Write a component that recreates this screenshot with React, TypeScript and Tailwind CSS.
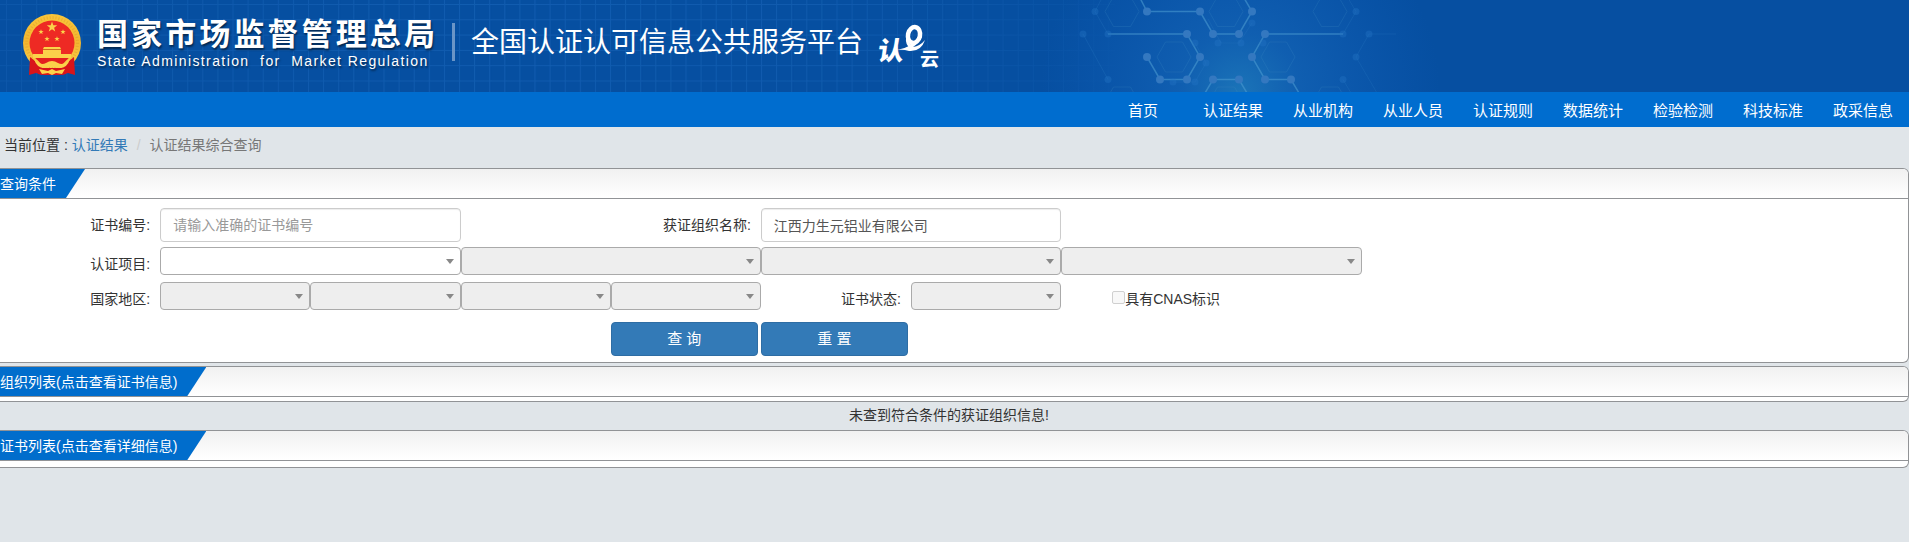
import type { ReactNode } from 'react';
import clsx from 'clsx';

const navItems = ['首页', '认证结果', '从业机构', '从业人员', '认证规则', '数据统计', '检验检测', '科技标准', '政采信息'];

const chains = [
  '1140,-2 1147,11.5 1200,11.5 1213,34 1239,34 1252,11.5 1244,-2',
  '1108,34 1187,34 1200,57 1187,79.5 1160,79.5 1147,57',
  '1343,34 1265,34 1252,57 1265,79.5 1291,79.5 1299,93',
  '1205,93 1213,79.5 1239,79.5 1247,93',
];

const faintChains = [
  '1102,-2 1095,11.5 1108,34',
  '1083,34 1108,79.5',
  '1348,-2 1356,11.5 1343,34',
  '1396,34 1369,34 1356,57 1377,93',
  '1343,79.5 1351,93',
  '1208,19 1221,43 1239,43 1252,23',
  '1195,43 1206,63 1195,82 1173,82',
];

const dots = [
  [1147, 11.5], [1200, 11.5], [1213, 34], [1239, 34], [1252, 11.5],
  [1187, 34], [1200, 57], [1187, 79.5], [1160, 79.5], [1147, 57],
  [1265, 34], [1252, 57], [1265, 79.5], [1291, 79.5], [1213, 79.5], [1239, 79.5],
];

const faintDots = [
  [1108, 34], [1343, 34], [1356, 11.5], [1369, 34], [1356, 57], [1343, 79.5],
  [1108, 79.5], [1095, 11.5], [1083, 34], [1218, 43], [1241, 43], [1252, 23],
  [1195, 43], [1206, 63], [1195, 82], [1173, 82], [1263, 43],
];

const hexes = [
  [1226, 11.5], [1174, 57], [1278, 57], [1226, 102], [1330, 11.5], [1122, 11.5], [1330, 102], [1122, 102],
];

const HeaderBackdrop = () => (
  <svg className="absolute left-0 top-0" width="1500" height="92" aria-hidden="true">
    <defs>
      <pattern id="grid" width="15.1" height="15.3" patternUnits="userSpaceOnUse" x="6" y="4">
        <path d="M.5 0V15.3M0 .5H15.1" stroke="#1c68bb" strokeOpacity=".55" />
      </pattern>
      <linearGradient id="gridFade">
        <stop offset="0" stopColor="#fff" stopOpacity=".6" />
        <stop offset=".4" stopColor="#fff" />
        <stop offset=".75" stopColor="#fff" stopOpacity=".9" />
        <stop offset="1" stopColor="#fff" stopOpacity=".2" />
      </linearGradient>
      <mask id="gridMask">
        <rect width="1115" height="92" fill="url(#gridFade)" />
      </mask>
      <radialGradient id="glow" cx="1240" cy="92" r="200" gradientUnits="userSpaceOnUse">
        <stop offset="0" stopColor="#1b74b8" />
        <stop offset=".3" stopColor="#1160b2" stopOpacity=".9" />
        <stop offset="1" stopColor="#0d5ab4" stopOpacity="0" />
      </radialGradient>
    </defs>
    <rect width="1115" height="92" fill="url(#grid)" mask="url(#gridMask)" />
    <rect x="1040" width="400" height="92" fill="url(#glow)" />
    <g fill="none" stroke="#3f8cc4" strokeOpacity=".22">
      {hexes.map(([x, y]) => (
        <path key={`${x}-${y}`} d={`M${x - 17} ${y}l8.5 -15h17l8.5 15l-8.5 15h-17z`} />
      ))}
    </g>
    <g fill="none" stroke="#2c7cc4" strokeOpacity=".25">
      {faintChains.map((points) => (
        <polyline key={points} points={points} />
      ))}
    </g>
    <g fill="none" stroke="#4a9ad0" strokeOpacity=".6" strokeWidth="1.5">
      {chains.map((points) => (
        <polyline key={points} points={points} />
      ))}
    </g>
    {faintDots.map(([x, y]) => (
      <circle key={`${x}-${y}`} cx={x} cy={y} r="3.5" fill="#2273c4" fillOpacity=".4" />
    ))}
    {dots.map(([x, y]) => (
      <circle key={`${x}-${y}`} cx={x} cy={y} r="4" fill="#3478c0" />
    ))}
  </svg>
);

const star = 'M0 -1L.24 -.32L.95 -.31L.38 .12L.59 .81L0 .4L-.59 .81L-.38 .12L-.95 -.31L-.24 -.32Z';

const Emblem = () => (
  <svg width="60" height="64" viewBox="0 0 60 64" aria-label="国徽">
    <defs>
      <linearGradient id="gold" x2="0" y2="1">
        <stop offset="0" stopColor="#f9c53a" />
        <stop offset=".5" stopColor="#f3b62f" />
        <stop offset="1" stopColor="#fbd752" />
      </linearGradient>
    </defs>
    <circle cx="30" cy="30" r="29" fill="url(#gold)" />
    <circle cx="30" cy="30" r="25.5" fill="none" stroke="#d8922a" strokeWidth="3" strokeDasharray="1 2" strokeOpacity=".4" />
    <circle cx="30" cy="30" r="22.5" fill="#ee2a24" />
    <path d="M8 44L18 52L22 57L20 62L14 60L7 62ZM52 44L42 52L38 57L40 62L46 60L53 62Z" fill="#d9141a" />
    <path d="M14 45h32l-5 6h-22z" fill="#e3201f" />
    <path d="M16 55h28v6l-6 1h-16l-6-1z" fill="#d9141a" />
    <g fill="#fbd24a">
      <path d={star} transform="translate(30 14) scale(5.5)" />
      <path d={star} transform="translate(19 19) scale(2.8)" />
      <path d={star} transform="translate(41 19) scale(2.8)" />
      <path d={star} transform="translate(25 26) scale(2.8)" />
      <path d={star} transform="translate(35 26) scale(2.8)" />
      <path d="M22 34h16l1 2H21zM21 37h18v4H21zM11 41h38v4H11z" />
      <path d="M12 46Q18 53 24 50Q30 46 36 50Q42 53 48 46Q45 56 36 55Q30 52 24 55Q15 56 12 46Z" />
      <path d="M17 56l9 2 4-2 4 2 9-2-3 5-6-1-4 2-4-2-6 1z" />
    </g>
    <path d="M21 36.500h18" fill="none" stroke="#c97a1c" strokeWidth=".8" />
  </svg>
);

const CloudLogo = () => (
  <svg width="64" height="48" viewBox="0 0 64 48" fill="#fff" aria-label="认e云">
    <text x="1" y="37" fontSize="26" fontWeight="900" transform="skewX(-8) translate(4 0)">认</text>
    <ellipse cx="37" cy="12" rx="6" ry="8" transform="rotate(12 37 12)" fill="none" stroke="#fff" strokeWidth="4.5" />
    <path d="M30 15Q31 21 36 22L34 26Q28 22 29 15Z" />
    <path d="M20 27Q34 25 42 13L45 14Q41 21 36 24Q43 23 48 17Q44 29 32 28Q26 26 20 27Z" />
    <text x="43" y="43" fontSize="19" fontWeight="700">云</text>
  </svg>
);

const Panel = ({ title, children }: { title: string; children: ReactNode }) => (
  <section className="overflow-hidden rounded-r-md border border-l-0 border-[#919396] bg-white">
    <div className="border-b border-[#919396] bg-linear-to-b from-[#f1f1f1] to-white">
      <h2 className="h-[29px] w-fit bg-[#006dcc] pr-[29px] text-sm leading-[31px] text-white [clip-path:polygon(0_0,100%_0,calc(100%-19px)_100%,0_100%)]">
        {title}
      </h2>
    </div>
    {children}
  </section>
);

const Label = ({ htmlFor, className, children }: { htmlFor: string; className?: string; children: ReactNode }) => (
  <label htmlFor={htmlFor} className={clsx('pr-[10px] text-right leading-5', className)}>
    {children}
  </label>
);

const TextBox = ({ id, ...rest }: { id: string; placeholder?: string; defaultValue?: string }) => (
  <input
    id={id}
    type="text"
    className="col-span-2 h-[34px] w-full rounded border border-[#ccc] bg-white px-3 text-[#555] shadow-[inset_0_1px_1px_rgba(0,0,0,0.075)] placeholder:text-[#999]"
    {...rest}
  />
);

const Dropdown = ({ id, label, wide, disabled = true }: { id: string; label?: string; wide?: boolean; disabled?: boolean }) => (
  <div className={clsx('relative', wide && 'col-span-2')}>
    <select
      id={id}
      aria-label={label}
      disabled={disabled}
      className="block h-7 w-full appearance-none rounded border border-[#aaa] bg-white px-2 disabled:bg-[#eee] disabled:opacity-100"
    />
    <svg className="pointer-events-none absolute right-[7px] top-3" width="8" height="5" aria-hidden="true">
      <path d="M0 0h8L4 5z" fill="#888" />
    </svg>
  </div>
);

const App = () => {
  return (
    <div className="min-h-screen bg-[#e0e5e9] font-['Liberation_Sans','Noto_Sans_CJK_SC',sans-serif] text-sm text-[#333]">
      <header className="relative flex h-[92px] overflow-hidden bg-[#064fa1] text-white">
        <HeaderBackdrop />
        <div className="relative flex items-start pl-[22px]">
          <div className="pt-[13px]">
            <Emblem />
          </div>
          <div className="ml-[15px] pt-[17px] text-shadow-[1px_2px_2px_rgba(0,0,0,0.5)]">
            <p className="text-[31px] leading-[35px] font-bold tracking-widest">国家市场监督管理总局</p>
            <p className="text-sm leading-[18px] tracking-widest whitespace-pre">State Administration  for  Market Regulation</p>
          </div>
          <div className="mt-[23px] ml-[14px] h-[38px] w-[3px] bg-[#6a95c7]" />
          <h1 className="ml-4 pt-[22px] text-[28px] leading-[42px]">全国认证认可信息公共服务平台</h1>
          <div className="ml-[14px] pt-[23px]">
            <CloudLogo />
          </div>
        </div>
      </header>

      <nav className="flex h-[35px] justify-end bg-[#006dcf] pr-px">
        {navItems.map((item) => (
          <a key={item} href="#" className="w-[90px] text-center text-[15px] leading-[37px] text-white">
            {item}
          </a>
        ))}
      </nav>

      <div className="flex h-[41px] pt-2 pl-1 leading-5">
        <span className="whitespace-pre">当前位置 : </span>
        <a href="#" className="text-[#337ab7]">认证结果</a>
        <span className="px-[9px] text-[#ccc]">/</span>
        <span className="text-[#777]">认证结果综合查询</span>
      </div>

      <main>
        <Panel title="查询条件">
          <form className="pt-[9px] pr-[96px] pb-[6px] pl-[10px]">
            <div className="grid grid-cols-12">
              <Label htmlFor="certNo" className="pt-[7px]">证书编号:</Label>
              <TextBox id="certNo" placeholder="请输入准确的证书编号" />
              <Label htmlFor="orgName" className="col-span-2 pt-[7px]">获证组织名称:</Label>
              <TextBox id="orgName" defaultValue="江西力生元铝业有限公司" />
            </div>
            <div className="mt-[5px] grid grid-cols-12">
              <Label htmlFor="project1" className="pt-[7px]">认证项目:</Label>
              <Dropdown id="project1" wide disabled={false} />
              <Dropdown id="project2" label="认证项目二级" wide />
              <Dropdown id="project3" label="认证项目三级" wide />
              <Dropdown id="project4" label="认证项目四级" wide />
            </div>
            <div className="mt-[7px] grid grid-cols-12">
              <Label htmlFor="region1" className="pt-[7px]">国家地区:</Label>
              <Dropdown id="region1" />
              <Dropdown id="region2" label="省" />
              <Dropdown id="region3" label="市" />
              <Dropdown id="region4" label="区县" />
              <Label htmlFor="status" className="pt-[7px]">证书状态:</Label>
              <Dropdown id="status" />
              <label className="col-span-2 flex items-start pt-[7px] pl-[51px] leading-5">
                <input
                  type="checkbox"
                  disabled
                  className="mt-[2px] size-[13px] appearance-none rounded-xs border border-[#d0d0d0] bg-[#f8f8f8]"
                />
                具有CNAS标识
              </label>
            </div>
            <div className="mt-3 grid grid-cols-12">
              <button
                type="button"
                className="col-start-5 mr-[3px] h-[34px] rounded border border-[#2e6da4] bg-[#337ab7] text-[15px] text-white"
              >
                查 询
              </button>
              <button
                type="reset"
                className="mr-[3px] h-[34px] rounded border border-[#2e6da4] bg-[#337ab7] text-[15px] text-white"
              >
                重 置
              </button>
            </div>
          </form>
        </Panel>

        <div className="mt-[3px]">
          <Panel title="组织列表(点击查看证书信息)">
            <div className="h-1" />
          </Panel>
        </div>

        <p className="pr-[11px] pb-[2px] text-center leading-[26px]">未查到符合条件的获证组织信息!</p>

        <Panel title="证书列表(点击查看详细信息)">
          <div className="h-[6px]" />
        </Panel>
      </main>
    </div>
  );
};

export default App;
